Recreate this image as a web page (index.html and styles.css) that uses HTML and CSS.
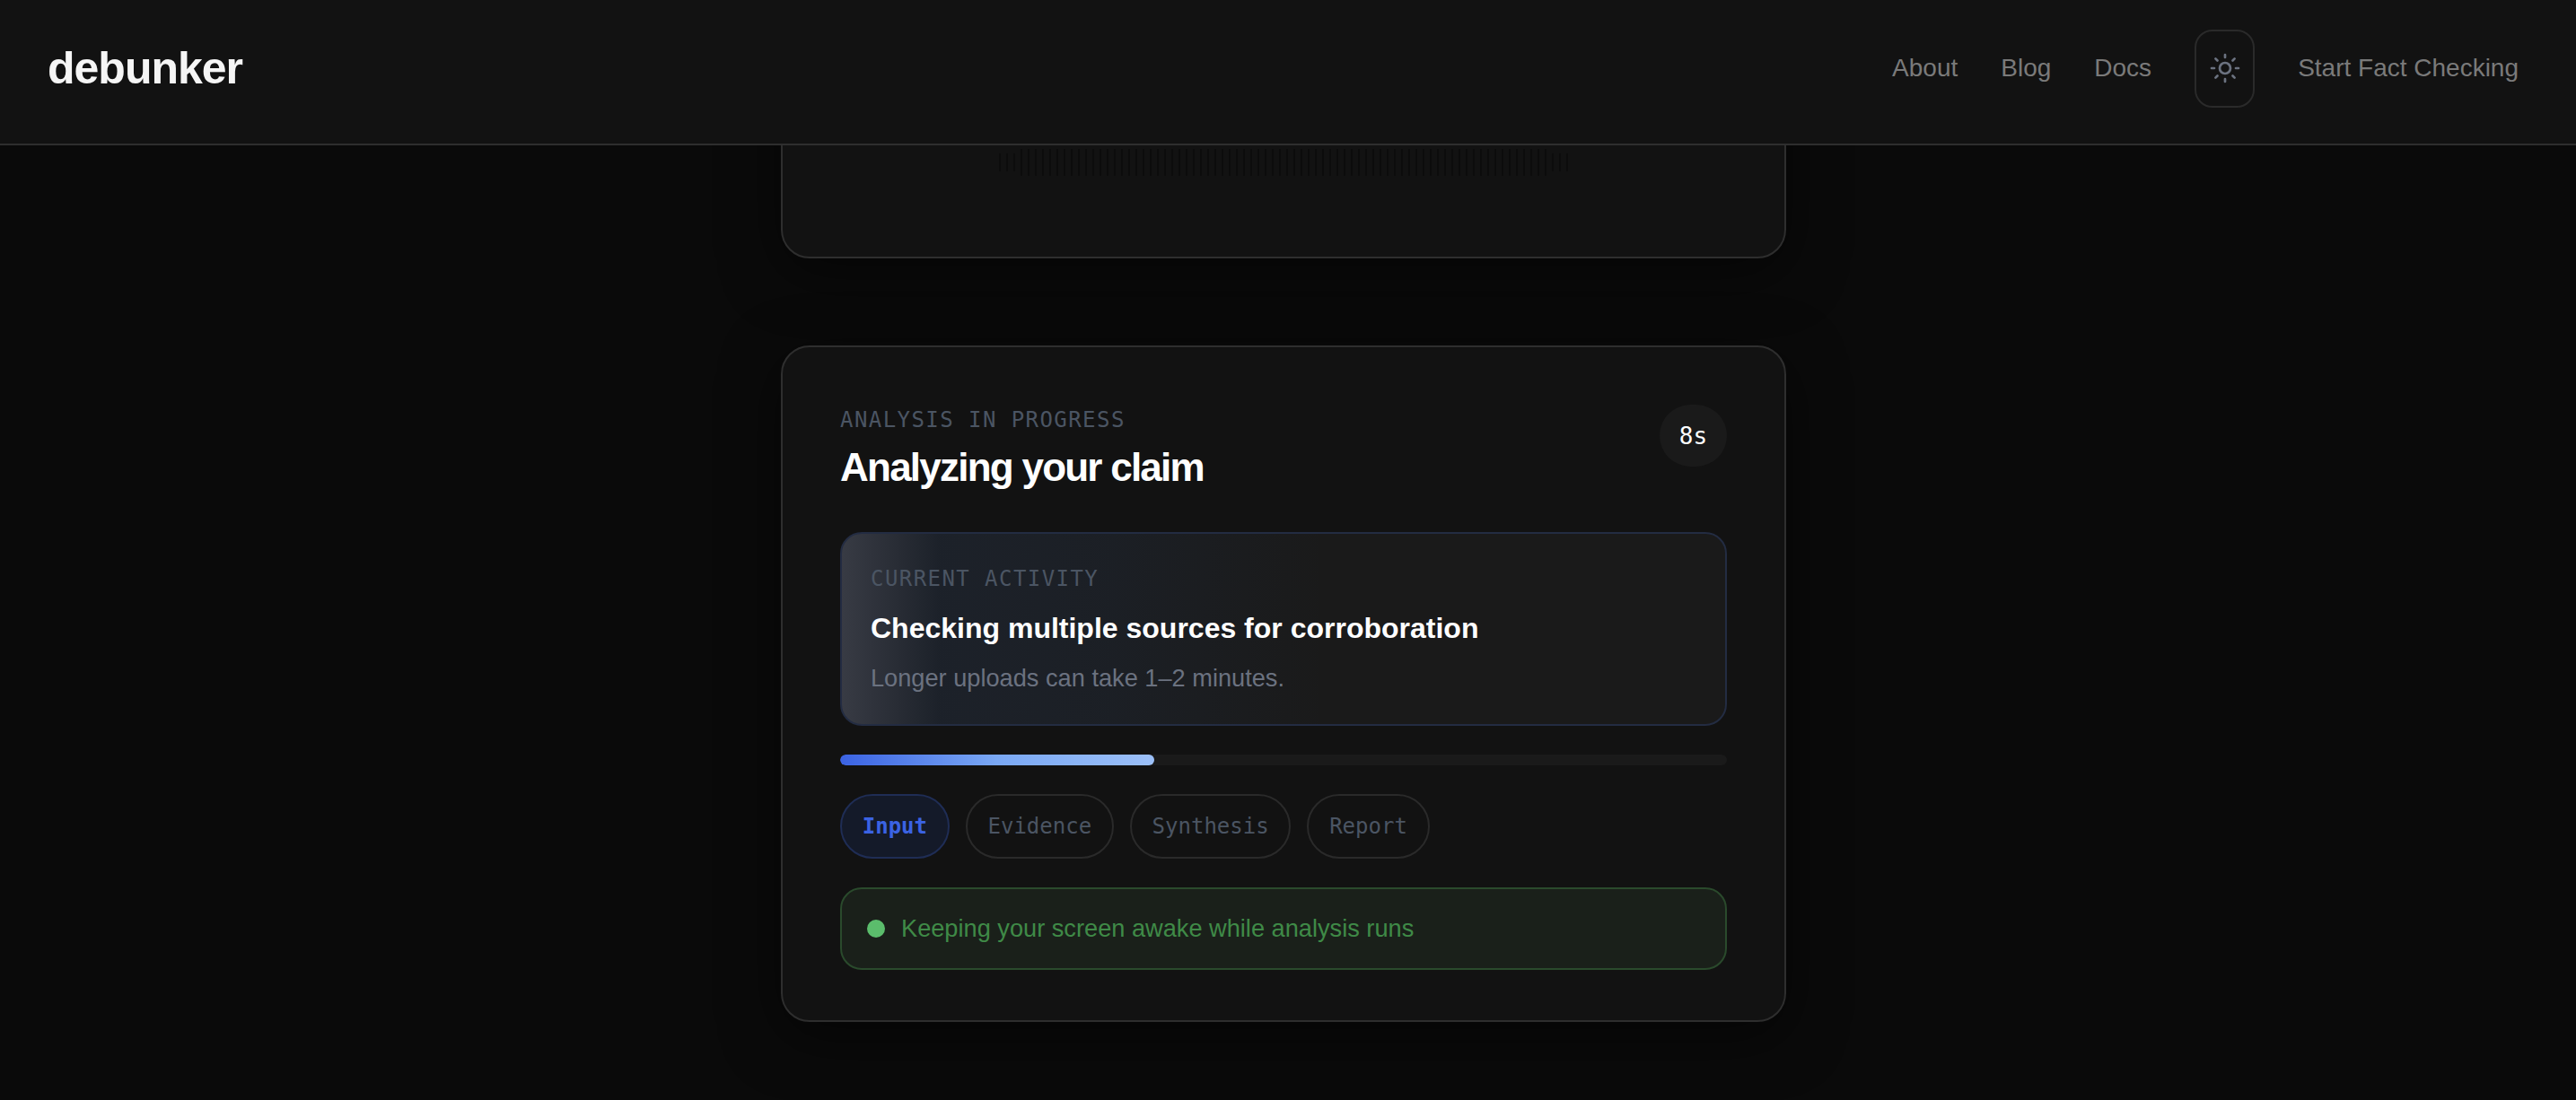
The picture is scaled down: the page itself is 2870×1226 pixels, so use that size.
FILE: index.html
```html
<!DOCTYPE html>
<html lang="en">
<head>
    <meta charset="UTF-8">
    <meta name="viewport" content="width=device-width, initial-scale=1.0">
    <title>debunker</title>
    <link rel="stylesheet" href="styles.css">
</head>
<body>
    <header class="topbar">
        <a class="logo" href="#">debunker</a>
        <nav class="nav">
            <a href="#">About</a>
            <a href="#">Blog</a>
            <a href="#">Docs</a>
            <button class="theme-btn" aria-label="Toggle theme">
                <svg width="36" height="36" viewBox="0 0 24 24" fill="none" stroke="currentColor" stroke-width="1.8" stroke-linecap="round">
                    <circle cx="12" cy="12" r="4"/>
                    <path d="M12 2v2M12 20v2M4.93 4.93l1.41 1.41M17.66 17.66l1.41 1.41M2 12h2M20 12h2M6.34 17.66l-1.41 1.41M19.07 4.93l-1.41 1.41"/>
                </svg>
            </button>
            <a href="#">Start Fact Checking</a>
        </nav>
    </header>

    <main class="page">
        <section class="card card-upload">
            <div class="wave">
                <span class="wave-part wave-short"></span>
                <span class="wave-part wave-long"></span>
                <span class="wave-part wave-short"></span>
            </div>
        </section>

        <section class="card card-progress">
            <div class="card-head">
                <div>
                    <div class="eyebrow">ANALYSIS IN PROGRESS</div>
                    <h2 class="title">Analyzing your claim</h2>
                </div>
                <div class="timer">8s</div>
            </div>

            <div class="activity">
                <div class="eyebrow">CURRENT ACTIVITY</div>
                <h3 class="activity-title">Checking multiple sources for corroboration</h3>
                <p class="activity-note">Longer uploads can take 1–2 minutes.</p>
            </div>

            <div class="progress">
                <div class="progress-fill"></div>
            </div>

            <ul class="steps">
                <li class="step active">Input</li>
                <li class="step">Evidence</li>
                <li class="step">Synthesis</li>
                <li class="step">Report</li>
            </ul>

            <div class="awake">
                <span class="awake-dot"></span>
                Keeping your screen awake while analysis runs
            </div>
        </section>
    </main>
</body>
</html>
```

FILE: styles.css
```css
body {
    margin: 0;
    height: 1226px;
    overflow: hidden;
    background: #0a0a0a;
    font-family: "Liberation Sans", Arial, sans-serif;
    color: #fff;
}

a {
    color: inherit;
    text-decoration: none;
}

.topbar {
    position: relative;
    z-index: 2;
    height: 152px;
    padding: 0 64px 8px 53px;
    display: flex;
    justify-content: space-between;
    align-items: center;
    background: #121212;
    border-bottom: 2px solid #2e2e2e;
}

.logo {
    font-size: 50px;
    font-weight: 700;
    letter-spacing: -1px;
    color: #f5f5f5;
}

.nav {
    display: flex;
    align-items: center;
    gap: 48px;
    font-size: 28px;
    color: #7a7a7a;
}

.theme-btn {
    width: 67px;
    height: 87px;
    padding: 0;
    display: flex;
    justify-content: center;
    align-items: center;
    background: none;
    border: 2px solid #2a2a2a;
    border-radius: 20px;
    color: #6b7280;
}

.page {
    padding-right: 10px;
    display: flex;
    flex-direction: column;
    align-items: center;
    gap: 97px;
}

.card {
    box-sizing: border-box;
    width: 1120px;
    background: #121212;
    border: 2px solid #2e2e2e;
    border-radius: 32px;
    box-shadow: 0 16px 64px rgba(0, 0, 0, 0.5);
}

.card-upload {
    margin-top: -100px;
    padding: 102px 0 90px;
    display: flex;
    justify-content: center;
}

.wave {
    display: flex;
    align-items: center;
    gap: 6px;
}

.wave-part {
    display: block;
    background: repeating-linear-gradient(90deg, #0c0c0c 0 2px, transparent 2px 8px);
}

.wave-short {
    width: 18px;
    height: 20px;
}

.wave-long {
    width: 586px;
    height: 30px;
}

.card-progress {
    padding: 64px 64px 56px;
}

.card-head {
    display: flex;
    justify-content: space-between;
    align-items: flex-start;
    margin-bottom: 36px;
}

.eyebrow {
    font-family: "DejaVu Sans Mono", monospace;
    font-size: 24px;
    line-height: 34px;
    letter-spacing: 1.44px;
    color: #4b5563;
}

.title {
    margin: 0;
    font-size: 44px;
    line-height: 72px;
    font-weight: 700;
    letter-spacing: -1.76px;
}

.timer {
    box-sizing: border-box;
    width: 75px;
    height: 69px;
    display: flex;
    justify-content: center;
    align-items: center;
    background: #1a1a1a;
    border-radius: 35px;
    font-family: "DejaVu Sans Mono", monospace;
    font-size: 26px;
}

.activity {
    padding: 32px;
    background: linear-gradient(90deg, rgba(125, 135, 165, 0.3), rgba(59, 130, 246, 0.07) 11%, rgba(59, 130, 246, 0.05) 30%, transparent 55%), #1a1a1a;
    border: 2px solid #232c42;
    border-radius: 24px;
}

.activity .eyebrow {
    line-height: 36px;
}

.activity-title {
    margin: 15px 0;
    font-size: 32px;
    line-height: 44px;
    font-weight: 700;
}

.activity-note {
    margin: 0;
    font-size: 27.2px;
    line-height: 38px;
    color: #6b7280;
}

.progress {
    height: 12px;
    margin: 32px 0;
    background: #1a1a1a;
    border-radius: 6px;
    overflow: hidden;
}

.progress-fill {
    width: 35.4%;
    height: 100%;
    border-radius: 6px;
    background: linear-gradient(90deg, #3b63e3, #7aa8f4, #9cc0f8);
}

.steps {
    display: flex;
    gap: 18px;
    margin: 0 0 32px;
    padding: 0;
    list-style: none;
}

.step {
    height: 72px;
    box-sizing: border-box;
    padding: 0 22.75px;
    display: flex;
    align-items: center;
    border: 2px solid #2a2a2a;
    border-radius: 36px;
    font-family: "DejaVu Sans Mono", monospace;
    font-size: 24px;
    color: #4b5563;
}

.step.active {
    background: #141a29;
    border-color: #1f2d55;
    color: #3b63e3;
    font-weight: 700;
}

.awake {
    box-sizing: border-box;
    height: 92px;
    padding: 0 28px;
    display: flex;
    align-items: center;
    gap: 18px;
    background: #1a201a;
    border: 2px solid #2a4a2c;
    border-radius: 24px;
    font-size: 27.2px;
    color: #3f8a47;
}

.awake-dot {
    width: 20px;
    height: 20px;
    border-radius: 50%;
    background: #5bbd6c;
}
```
